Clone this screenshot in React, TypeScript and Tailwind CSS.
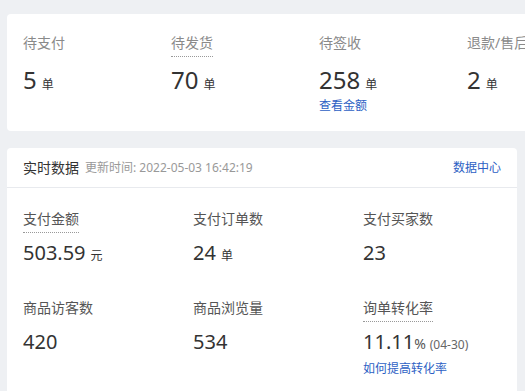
import React from "react";

type Stat = {
  label: string;
  value: string;
  unit?: string;
  extra?: string;
  dotted?: boolean;
  link?: string;
};

const orders: Stat[] = [
  { label: "待支付", value: "5", unit: "单" },
  { label: "待发货", value: "70", unit: "单", dotted: true },
  { label: "待签收", value: "258", unit: "单", link: "查看金额" },
  { label: "退款/售后", value: "2", unit: "单" },
];

const realtime: Stat[] = [
  { label: "支付金额", value: "503.59", unit: "元", dotted: true },
  { label: "支付订单数", value: "24", unit: "单" },
  { label: "支付买家数", value: "23" },
  { label: "商品访客数", value: "420" },
  { label: "商品浏览量", value: "534" },
  {
    label: "询单转化率",
    value: "11.11",
    unit: "%",
    extra: "(04-30)",
    dotted: true,
    link: "如何提高转化率",
  },
];

const font = "font-['Noto_Sans','Noto_Sans_CJK_SC',sans-serif]";

function Label({ text, dotted, className }: { text: string; dotted?: boolean; className: string }) {
  return (
    <div className="flex">
      <span
        className={`text-[14px] leading-[20px] pb-[3px] ${className} ${
          dotted ? "border-b border-dotted border-[#999]" : "border-b border-transparent"
        }`}
      >
        {text}
      </span>
    </div>
  );
}

export default function App() {
  return (
    <div className={`h-[391px] w-[525px] overflow-hidden bg-[#eef0f3] ${font}`}>
      {/* order status */}
      <div className="ml-[7px] mt-[14px] flex h-[117px] w-[620px] rounded-[4px] bg-white px-4 pt-[19px]">
        {orders.map((o) => (
          <div key={o.label} className="w-[148px] shrink-0">
            <Label text={o.label} dotted={o.dotted} className="text-[#8a8a8a]" />
            <div className="mt-[8px] flex items-baseline text-[#333]">
              <span className="text-[24px] leading-[30px]">{o.value}</span>
              <span className="ml-[5px] text-[12px]">{o.unit}</span>
            </div>
            {o.link && (
              <div className="mt-[3px] text-[12px] leading-[16px] text-[#2d5fc4]">{o.link}</div>
            )}
          </div>
        ))}
      </div>

      {/* realtime data */}
      <div className="ml-[7px] mt-[17px] w-[510px] rounded-t-[4px] bg-white pb-6">
        <div className="flex h-[40px] items-center border-b border-[#e8eaee] px-4">
          <span className="text-[14px] text-[#333]">实时数据</span>
          <span className="ml-[6px] text-[12px] text-[#999]">更新时间: 2022-05-03 16:42:19</span>
          <span className="ml-auto text-[12px] text-[#2d5fc4]">数据中心</span>
        </div>
        <div className="grid grid-cols-3 gap-y-[32px] pt-[21px]">
          {realtime.map((s) => (
            <div key={s.label} className="pl-4">
              <Label text={s.label} dotted={s.dotted} className="text-[#555]" />
              <div className="mt-[7px] flex items-baseline text-[#333]">
                <span className="text-[20px] leading-[26px]">{s.value}</span>
                {s.unit && (
                  <span className={`${s.unit === "%" ? "ml-0 text-[14px] text-[#555]" : "ml-[5px] text-[12px]"}`}>
                    {s.unit}
                  </span>
                )}
                {s.extra && <span className="ml-[4px] text-[12px] text-[#666]">{s.extra}</span>}
              </div>
              {s.link && (
                <div className="mt-[6px] text-[12px] leading-[16px] text-[#2d5fc4]">{s.link}</div>
              )}
            </div>
          ))}
        </div>
      </div>
    </div>
  );
}
